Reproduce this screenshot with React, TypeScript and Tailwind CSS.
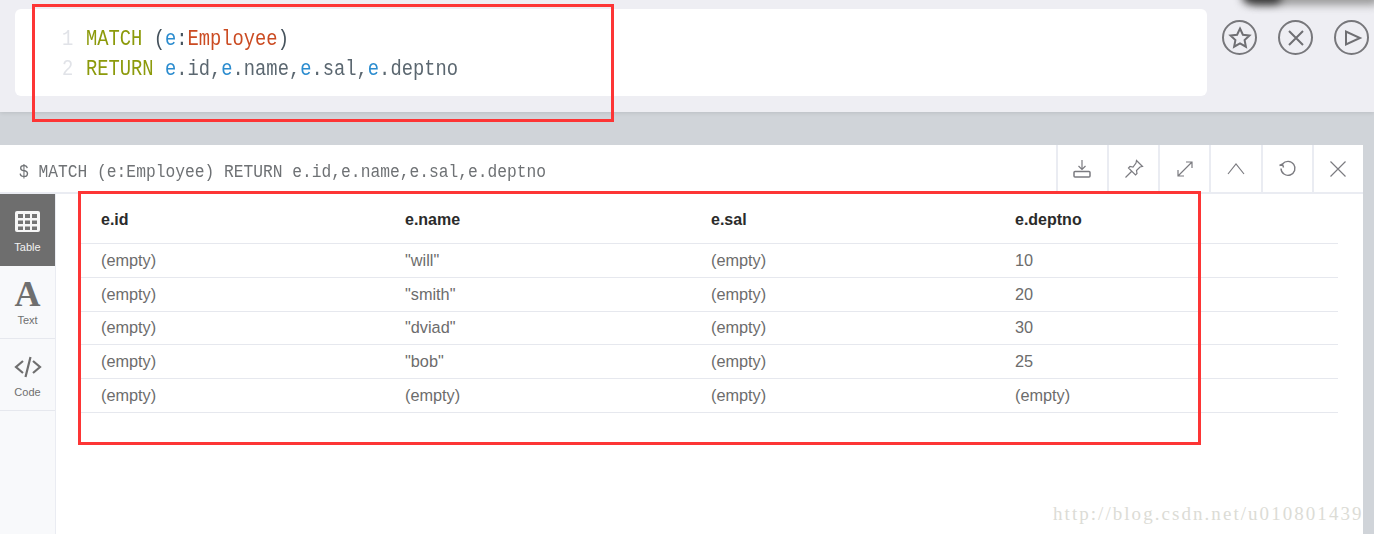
const mono = "font-['Liberation_Mono',monospace]"

const rows = [
  ['(empty)', '"will"', '(empty)', '10'],
  ['(empty)', '"smith"', '(empty)', '20'],
  ['(empty)', '"dviad"', '(empty)', '30'],
  ['(empty)', '"bob"', '(empty)', '25'],
  ['(empty)', '(empty)', '(empty)', '(empty)'],
]

function RoundButton({ d }: { d: string }) {
  return (
    <div className="flex h-[35px] w-[35px] items-center justify-center rounded-full border-2 border-[#77777b]">
      <svg width="24" height="24" viewBox="0 0 24 24" fill="none" stroke="#6f6f73" strokeWidth="2" strokeLinejoin="miter">
        <path d={d} />
      </svg>
    </div>
  )
}

function ActionIcon({ children }: { children: React.ReactNode }) {
  return (
    <div className="flex h-full w-[51.2px] items-center justify-center border-l-2 border-[#eaecf2]">
      <svg width="20" height="20" viewBox="0 0 20 20" fill="none" stroke="#7b7b80" strokeWidth="1.2">
        {children}
      </svg>
    </div>
  )
}

export default function App() {
  return (
    <div className="relative h-[534px] w-[1374px] overflow-hidden bg-[#d0d4d9] font-['Liberation_Sans',sans-serif]">
      <div className="flex h-[112px] bg-[#eeeef3] pl-[15px] pt-[9px] shadow-[0_1px_4px_rgba(0,0,0,0.1)]">
        <div className="h-[87px] w-[1192px] rounded-md bg-white pl-[47px] pt-[16px] text-[18.8px] leading-[29.5px]">
          <div className={`flex origin-left scale-y-[1.18] ${mono}`}>
            <span className="w-[24px] text-[#e1e3e8]">1</span>
            <span className="text-[#8c9a0b]">MATCH</span>
            <span className="whitespace-pre text-[#45525c]"> (</span>
            <span className="text-[#2b8ccf]">e</span>
            <span className="text-[#45525c]">:</span>
            <span className="text-[#cb4b22]">Employee</span>
            <span className="text-[#45525c]">)</span>
          </div>
          <div className={`flex origin-left scale-y-[1.18] ${mono}`}>
            <span className="w-[24px] text-[#e1e3e8]">2</span>
            <span className="text-[#8c9a0b]">RETURN</span>
            <span className="whitespace-pre text-[#5b6770]"> </span>
            <span className="text-[#2b8ccf]">e</span>
            <span className="text-[#5b6770]">.id,</span>
            <span className="text-[#2b8ccf]">e</span>
            <span className="text-[#5b6770]">.name,</span>
            <span className="text-[#2b8ccf]">e</span>
            <span className="text-[#5b6770]">.sal,</span>
            <span className="text-[#2b8ccf]">e</span>
            <span className="text-[#5b6770]">.deptno</span>
          </div>
        </div>
        <div className="ml-[15px] flex h-[35px] gap-[21px] pt-[11px]">
          <RoundButton d="M12 2.500l2.900 6.200 6.600.800-4.900 4.600 1.300 6.600L12 17.400l-5.900 3.300 1.300-6.600-4.900-4.600 6.600-.800Z" />
          <RoundButton d="M5 5l14 14M19 5L5 19" />
          <RoundButton d="M6 5.500v13L20 12Z" />
        </div>
      </div>

      <div className="mt-[33px] h-[389px] w-[1363px] bg-white">
        <div className="flex h-[49px] items-center justify-between border-b-2 border-[#eaecf2]">
          <span className={`inline-block origin-left scale-y-110 pl-[19px] pt-[8px] text-[16.27px] text-[#6f7275] ${mono}`}>$ MATCH (e:Employee) RETURN e.id,e.name,e.sal,e.deptno</span>
          <div className="flex h-full">
            <ActionIcon>
              <path d="M10 1v9M6.500 7 10 10.500 13.500 7" />
              <rect x="2" y="12.500" width="16" height="5.500" rx="1" strokeWidth="1.500" />
            </ActionIcon>
            <ActionIcon>
              <path d="M1.500 18.500 7.500 12.500M12.500 1.500l6 6-2.500.500-3.500 3.500.500 3-1.500 1.500-7-7 1.500-1.500 3 .500L12 4Z" />
            </ActionIcon>
            <ActionIcon>
              <path d="M3 17 17 3M11 3h6v6M3 11v6h6" />
            </ActionIcon>
            <ActionIcon>
              <path d="M2 15 10 5l8 10" />
            </ActionIcon>
            <ActionIcon>
              <path d="M5.500 5a7 7 0 1 1-1.500 4.500M2.500 6.500l3-1.500 1 3.500" strokeWidth="1.400" />
            </ActionIcon>
            <ActionIcon>
              <path d="M2.500 2.500l15 15M17.500 2.500l-15 15" />
            </ActionIcon>
          </div>
        </div>

        <div className="flex h-[340px]">
          <div className="w-[56px] border-r border-[#eaecf2] bg-[#f8f9fb] text-[11px] leading-[13px] text-[#6f6f6f]">
            <div className="flex h-[72px] flex-col items-center bg-[#6e6e6e] pt-[17px] text-[#f2f2f2]">
              <svg width="25" height="21" viewBox="0 0 25 21" fill="#f6f6f6">
                <rect width="25" height="21" rx="2" />
                <g fill="#747474">
                  <rect x="3" y="3" width="5" height="4" />
                  <rect x="10" y="3" width="5" height="4" />
                  <rect x="17" y="3" width="5" height="4" />
                  <rect x="3" y="9.500" width="5" height="3.500" />
                  <rect x="10" y="9.500" width="5" height="3.500" />
                  <rect x="17" y="9.500" width="5" height="3.500" />
                  <rect x="3" y="15.500" width="5" height="3.500" />
                  <rect x="10" y="15.500" width="5" height="3.500" />
                  <rect x="17" y="15.500" width="5" height="3.500" />
                </g>
              </svg>
              <span className="mt-[9px]">Table</span>
            </div>
            <div className="flex h-[73px] flex-col items-center border-b border-[#e6e8ee] pt-[12px]">
              <span className="font-['Liberation_Serif',serif] text-[36px] font-bold leading-[32px]">A</span>
              <span className="mt-[4px]">Text</span>
            </div>
            <div className="flex h-[72px] flex-col items-center border-b border-[#e6e8ee] pt-[17px]">
              <svg width="28" height="22" viewBox="0 0 28 22" fill="none" stroke="#6f6f6f" strokeWidth="2.200">
                <path d="M9 5 2 11l7 6M19 5l7 6-7 6M16.500 1l-5 20" />
              </svg>
              <span className="mt-[8px]">Code</span>
            </div>
          </div>

          <div className="ml-[25px] h-fit w-[1257px]">
            <div className="grid h-[50px] grid-cols-[304px_306px_304px_1fr] border-b border-[#e6e8ee] pl-[20px] pt-[14px] text-[16px] font-bold text-[#2b2b2b]">
              <span>e.id</span>
              <span>e.name</span>
              <span>e.sal</span>
              <span>e.deptno</span>
            </div>
            {rows.map((row, i) => (
              <div
                key={i}
                className={`grid h-[33.8px] grid-cols-[304px_306px_304px_1fr] items-center border-b border-[#e6e8ee] pl-[20px] text-[16.3px] text-[#6c6c6c] ${i === 2 || i === 3 ? 'pb-[2px]' : ''}`}
              >
                {row.map((cell, j) => (
                  <span key={j}>{cell}</span>
                ))}
              </div>
            ))}
          </div>
        </div>
      </div>

      <div className="absolute left-[1250px] top-[-9px] h-[14px] w-[130px] rounded-full bg-[#999] blur-[4px]" />
      <div className="absolute left-[1242px] top-[-12px] h-[16px] w-[40px] rounded-full bg-[#333] blur-[4px]" />
      <div className="absolute left-[32px] top-[4px] h-[118px] w-[582px] border-[3px] border-[#fd3535]" />
      <div className="absolute left-[78px] top-[191px] h-[254px] w-[1123px] border-[3px] border-[#fd3535]" />
      <div className="absolute left-[1053px] top-[500px] font-['Liberation_Serif',serif] text-[19px] tracking-[2.05px] text-[#dcdcd6]">
        http://blog.csdn.net/u010801439
      </div>
    </div>
  )
}
